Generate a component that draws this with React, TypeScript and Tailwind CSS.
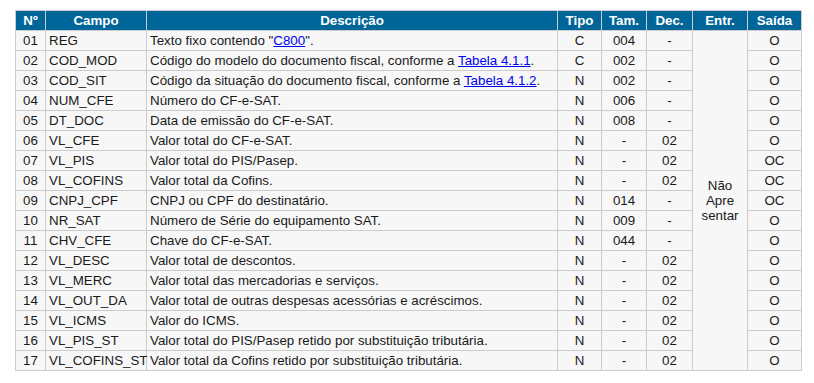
import React from "react";

type Row = {
    n: string;
    campo: string;
    desc: React.ReactNode;
    tipo: string;
    tam: string;
    dec: string;
    saida: string;
};

const link = "text-[#0000ee] underline";

const rows: Row[] = [
    { n: "01", campo: "REG", desc: <>Texto fixo contendo "<a href="#" className={link}>C800</a>".</>, tipo: "C", tam: "004", dec: "-", saida: "O" },
    { n: "02", campo: "COD_MOD", desc: <>Código do modelo do documento fiscal, conforme a <a href="#" className={link}>Tabela 4.1.1</a>.</>, tipo: "C", tam: "002", dec: "-", saida: "O" },
    { n: "03", campo: "COD_SIT", desc: <>Código da situação do documento fiscal, conforme a <a href="#" className={link}>Tabela 4.1.2</a>.</>, tipo: "N", tam: "002", dec: "-", saida: "O" },
    { n: "04", campo: "NUM_CFE", desc: "Número do CF-e-SAT.", tipo: "N", tam: "006", dec: "-", saida: "O" },
    { n: "05", campo: "DT_DOC", desc: "Data de emissão do CF-e-SAT.", tipo: "N", tam: "008", dec: "-", saida: "O" },
    { n: "06", campo: "VL_CFE", desc: "Valor total do CF-e-SAT.", tipo: "N", tam: "-", dec: "02", saida: "O" },
    { n: "07", campo: "VL_PIS", desc: "Valor total do PIS/Pasep.", tipo: "N", tam: "-", dec: "02", saida: "OC" },
    { n: "08", campo: "VL_COFINS", desc: "Valor total da Cofins.", tipo: "N", tam: "-", dec: "02", saida: "OC" },
    { n: "09", campo: "CNPJ_CPF", desc: "CNPJ ou CPF do destinatário.", tipo: "N", tam: "014", dec: "-", saida: "OC" },
    { n: "10", campo: "NR_SAT", desc: "Número de Série do equipamento SAT.", tipo: "N", tam: "009", dec: "-", saida: "O" },
    { n: "11", campo: "CHV_CFE", desc: "Chave do CF-e-SAT.", tipo: "N", tam: "044", dec: "-", saida: "O" },
    { n: "12", campo: "VL_DESC", desc: "Valor total de descontos.", tipo: "N", tam: "-", dec: "02", saida: "O" },
    { n: "13", campo: "VL_MERC", desc: "Valor total das mercadorias e serviços.", tipo: "N", tam: "-", dec: "02", saida: "O" },
    { n: "14", campo: "VL_OUT_DA", desc: "Valor total de outras despesas acessórias e acréscimos.", tipo: "N", tam: "-", dec: "02", saida: "O" },
    { n: "15", campo: "VL_ICMS", desc: "Valor do ICMS.", tipo: "N", tam: "-", dec: "02", saida: "O" },
    { n: "16", campo: "VL_PIS_ST", desc: "Valor total do PIS/Pasep retido por substituição tributária.", tipo: "N", tam: "-", dec: "02", saida: "O" },
    { n: "17", campo: "VL_COFINS_ST", desc: "Valor total da Cofins retido por substituição tributária.", tipo: "N", tam: "-", dec: "02", saida: "O" },
];

const th = "border border-[#cccccc] bg-[#006699] text-white font-bold text-center h-[20px] p-0";
const td = "border border-[#cccccc] bg-[#f7f7f7] h-[20px] py-0 whitespace-nowrap";

export default function App() {
    return (
        <div className="min-h-screen bg-white pt-[10px] pl-[15px] font-['Liberation_Sans',Arial,sans-serif] text-[13.33px] leading-[15px] text-[#1a1a1a]">
            <table className="table-fixed border-collapse w-[786px]">
                <colgroup>
                    <col className="w-[30px]" />
                    <col className="w-[101px]" />
                    <col className="w-[411px]" />
                    <col className="w-[44px]" />
                    <col className="w-[45px]" />
                    <col className="w-[46px]" />
                    <col className="w-[55px]" />
                    <col className="w-[54px]" />
                </colgroup>
                <thead>
                    <tr>
                        <th className={th}>Nº</th>
                        <th className={th}>Campo</th>
                        <th className={th}>Descrição</th>
                        <th className={th}>Tipo</th>
                        <th className={th}>Tam.</th>
                        <th className={th}>Dec.</th>
                        <th className={th}>Entr.</th>
                        <th className={th}>Saída</th>
                    </tr>
                </thead>
                <tbody>
                    {rows.map((r, i) => (
                        <tr key={r.n}>
                            <td className={`${td} text-center px-0`}>{r.n}</td>
                            <td className={`${td} px-[3px]`}>{r.campo}</td>
                            <td className={`${td} px-[3px]`}>{r.desc}</td>
                            <td className={`${td} text-center px-0`}>{r.tipo}</td>
                            <td className={`${td} text-center px-0`}>{r.tam}</td>
                            <td className={`${td} text-center px-0`}>{r.dec}</td>
                            {i === 0 && (
                                <td rowSpan={17} className="border border-[#cccccc] bg-[#f7f7f7] text-center align-middle p-0">
                                    Não<br />Apre<br />sentar
                                </td>
                            )}
                            <td className={`${td} text-center px-0`}>{r.saida}</td>
                        </tr>
                    ))}
                </tbody>
            </table>
        </div>
    );
}
